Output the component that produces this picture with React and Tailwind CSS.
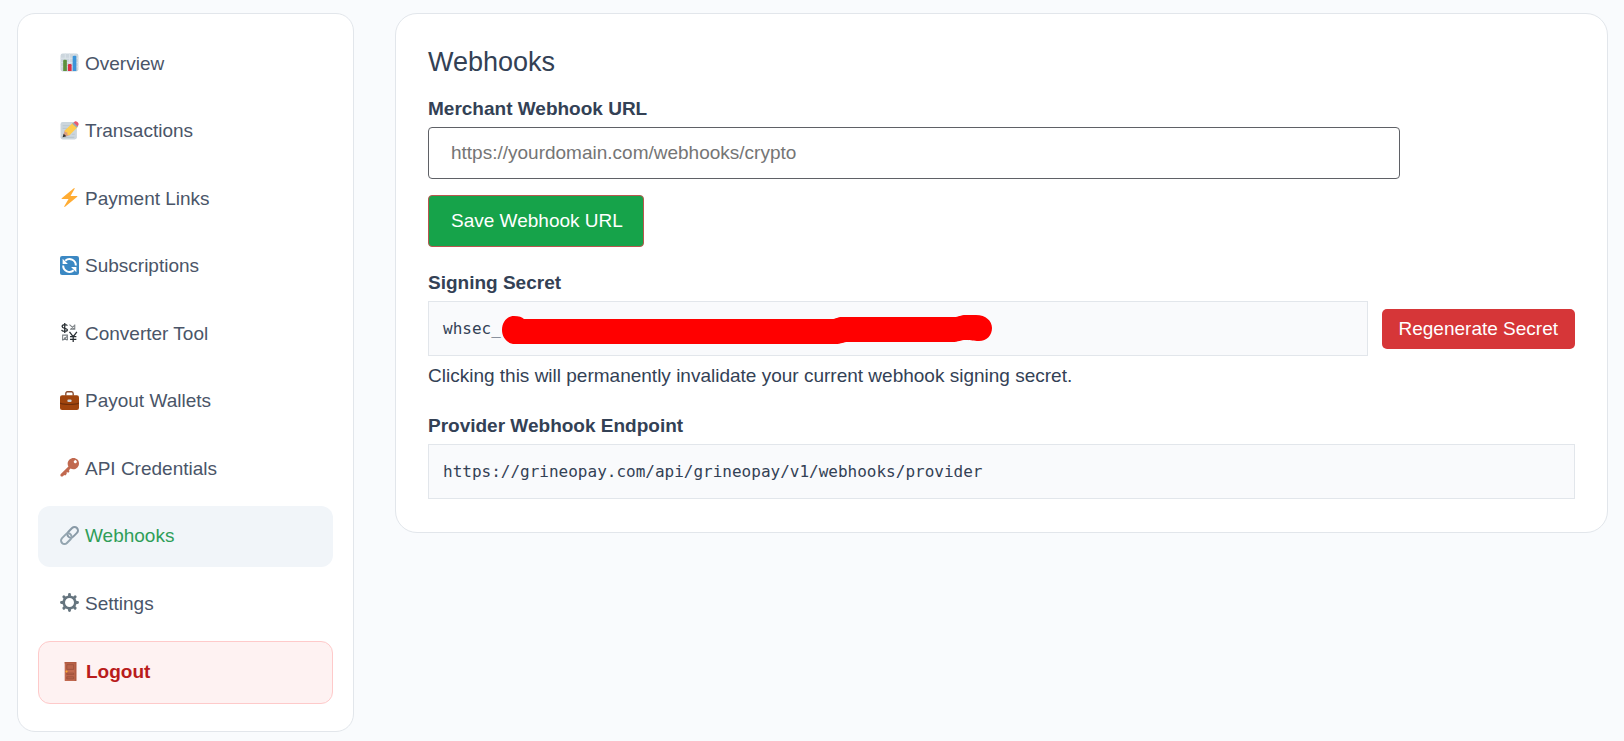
import React, { useState } from "react";

const Icon = ({ children }) => (
  <svg
    viewBox="0 0 36 36"
    className="size-[19px] shrink-0 mb-0.5"
    aria-hidden="true"
  >
    {children}
  </svg>
);

const ChartIcon = () => (
  <Icon>
    <rect x="1" y="1" width="34" height="34" rx="4" fill="#ccd6dd" />
    <path
      d="M1 10h34M1 18h34M1 26h34M10 1v34M18 1v34M26 1v34"
      stroke="#dbe3e9"
      strokeWidth="2"
    />
    <path d="M6 15a2 2 0 0 1 2-2h3a2 2 0 0 1 2 2v19H6z" fill="#5c913b" />
    <path d="M15 23a2 2 0 0 1 2-2h3a2 2 0 0 1 2 2v11h-7z" fill="#dd2e44" />
    <path d="M24 7a2 2 0 0 1 2-2h3a2 2 0 0 1 2 2v27h-7z" fill="#3b94d9" />
  </Icon>
);

const MemoIcon = () => (
  <Icon>
    <rect x="1" y="2" width="31" height="33" rx="4" fill="#ccd6dd" />
    <path
      d="M5 9h14M5 14h9M5 31h22M22 25h6"
      stroke="#b9c6cf"
      strokeWidth="2"
    />
    <path d="M9 18l-4 13 13-4 3-4-8-8z" fill="#d99e82" />
    <path d="M5 31l2-7 5 5z" fill="#292f33" />
    <path d="M9 18L24 4l9 8-15 15-4-1v-4l-4-1z" fill="#ffcc4d" />
    <path d="M23 5l4-3 8 7-3 4z" fill="#99aab5" />
    <path d="M26 3l2-2c1-1 3-1 5 1s3 4 2 5l-2 3z" fill="#ea596e" />
  </Icon>
);

const BoltIcon = () => (
  <Icon>
    <path
      d="M32.9 15.6A1 1 0 0 0 32 15H19.9L27.8 1.5A1 1 0 0 0 26.3.3l-23 19A1 1 0 0 0 4 21h12.2L8.1 34.5a1 1 0 0 0 1.5 1.2l23-19a1 1 0 0 0 .3-1.1z"
      fill="#ffac33"
    />
  </Icon>
);

const RefreshIcon = () => (
  <Icon>
    <rect width="36" height="36" rx="4" fill="#3b88c3" />
    <path
      d="M10 9A12 12 0 0 1 30 18M26 27A12 12 0 0 1 6 18"
      fill="none"
      stroke="#fff"
      strokeWidth="3.800"
    />
    <path d="M5 5v10h10z" fill="#fff" />
    <path d="M31 31V21H21z" fill="#fff" />
  </Icon>
);

const CurrencyIcon = () => (
  <Icon>
    <g fill="none" stroke="#292f33" strokeWidth="2.400">
      <path d="M14 5C13 2 4 2 4 6.500S14 9 14 13s-10 4-11 0M9 0v19" />
      <path d="M18 17l7 9 7-9M25 26v10M19 26h12M19 31h12" />
    </g>
    <g fill="none" stroke="#7b8185" strokeWidth="2">
      <path d="M18 3l9 8M28 3v9h-9M20 12l7-7" />
      <path d="M5 23h9v9M5 22v11M5 33l9-8M8 28l6 5" />
    </g>
  </Icon>
);

const BriefcaseIcon = () => (
  <Icon>
    <path
      d="M11 9V5c0-2 1-3.500 3-3.500h8c2 0 3 1.500 3 3.500v4"
      fill="none"
      stroke="#8a4b2d"
      strokeWidth="2.600"
    />
    <rect y="8" width="36" height="28" rx="4" fill="#a0440d" />
    <path d="M0 22c5 2 10 2.500 18 2.500S31 24 36 22v2c-5 2-11 2.500-18 2.500S5 26 0 24z" fill="#6e2e0a" />
    <rect x="14" y="16" width="8" height="5" rx="2" fill="#ccd6dd" />
  </Icon>
);

const KeyIcon = () => (
  <Icon>
    <path
      fillRule="evenodd"
      d="M33 3c-4-4-11-4-15 0-4 4-4.500 9-2 13L1.500 30.500c-1 1-1 3 0 4s3 1 4 0L8 32l2 1 3-3-1-2 2-1 2 1 2-3-1-2 3-3c4 2.500 9 2 13-2 4-4 4-11 0-15zm-2 6a2.500 2.500 0 1 1-4-4 2.500 2.500 0 0 1 4 4z"
      fill="#c1694f"
    />
  </Icon>
);

const LinkIcon = () => (
  <Icon>
    <g fill="none" strokeWidth="3.800">
      <rect
        x="12.500"
        y="5.500"
        width="23"
        height="13"
        rx="6.500"
        transform="rotate(-45 24 12)"
        stroke="#8899a6"
      />
      <rect
        x="0.500"
        y="17.500"
        width="23"
        height="13"
        rx="6.500"
        transform="rotate(-45 12 24)"
        stroke="#94a5b0"
      />
    </g>
  </Icon>
);

const GearIcon = () => (
  <Icon>
    <circle cx="18" cy="18" r="11" fill="none" stroke="#66757f" strokeWidth="5" />
    <g stroke="#66757f" strokeWidth="5.500" strokeLinecap="round">
      <path d="M18 2.800V6M18 30v3.200M2.800 18H6M30 18h3.200M7.300 7.300l2.200 2.200M26.500 26.500l2.200 2.200M7.300 28.700l2.200-2.200M26.500 9.500l2.200-2.200" />
    </g>
  </Icon>
);

const DoorIcon = () => (
  <Icon>
    <rect x="7" width="22" height="36" rx="1" fill="#c1694f" />
    <path d="M7 0h22v36h-3V3H7z" fill="#b05a41" />
    <path
      d="M11 5h13v9H11zM11 21h13v3H11zM11 28h13v4H11z"
      fill="#b9634a"
      stroke="#9a4f3a"
      strokeWidth="1.500"
    />
    <circle cx="10.500" cy="18" r="2" fill="#ffac33" />
  </Icon>
);

const navItems = [
  { label: "Overview", icon: ChartIcon },
  { label: "Transactions", icon: MemoIcon },
  { label: "Payment Links", icon: BoltIcon },
  { label: "Subscriptions", icon: RefreshIcon },
  { label: "Converter Tool", icon: CurrencyIcon },
  { label: "Payout Wallets", icon: BriefcaseIcon },
  { label: "API Credentials", icon: KeyIcon },
  { label: "Webhooks", icon: LinkIcon },
  { label: "Settings", icon: GearIcon },
];

const Sidebar = () => {
  const [active, setActive] = useState("Webhooks");

  return (
    <aside className="w-[337px] shrink-0 flex bg-white border border-[#e2e6eb] rounded-[18px] px-5 pt-[19px] pb-[27px]">
      <nav className="flex-1 flex flex-col justify-between">
        {navItems.map(({ label, icon: NavIcon }) => (
          <a
            key={label}
            href="#"
            onClick={() => setActive(label)}
            className={`h-[61px] flex items-center gap-1.5 px-[22px] rounded-xl ${
              active === label
                ? "bg-[#f1f5f9] text-[#2f9e58]"
                : "text-[#4a5568]"
            }`}
          >
            <NavIcon />
            <span>{label}</span>
          </a>
        ))}
        <button
          type="button"
          className="h-[63px] flex items-center gap-1.5 px-[22px] rounded-xl border border-[#fecaca] bg-[#fef2f2] text-[#b91c1c] font-bold"
        >
          <DoorIcon />
          <span>Logout</span>
        </button>
      </nav>
    </aside>
  );
};

// Covers the secret part of the key
const Redaction = () => (
  <svg
    viewBox="0 0 490 29"
    className="w-[490px] h-[29px] ml-px mt-0.5 shrink-0"
    aria-hidden="true"
  >
    <path
      d="M12 1C17 1 20 2 22 4H330C334 4 335 2 340 2H452C457 2 458 0 464 0H474C484 0 490 6 490 13C490 20 485 26 477 26C471 26 470 25 464 25C458 25 457 27 450 27H346C341 27 340 29 333 29H13C5 29 0 22 0 15C0 7 5 1 12 1Z"
      fill="#ff0000"
    />
  </svg>
);

const WebhooksPanel = () => {
  const [url, setUrl] = useState("");

  return (
    <main className="flex-1 min-w-0 self-start bg-white border border-[#e2e6eb] rounded-[22px] px-8 pt-[30px] pb-[33px]">
      <h1 className="text-[27px] leading-9 mb-[15px]">Webhooks</h1>

      <form onSubmit={(e) => e.preventDefault()} className="mb-[22px]">
        <label htmlFor="webhook-url" className="block font-bold mb-1">
          Merchant Webhook URL
        </label>
        <input
          id="webhook-url"
          type="url"
          value={url}
          onChange={(e) => setUrl(e.target.value)}
          placeholder="https://yourdomain.com/webhooks/crypto"
          className="block w-full max-w-[972px] h-[52px] px-[22px] mb-4 bg-white border border-[#5f6166] rounded placeholder:text-[#757575]"
        />
        <button
          type="submit"
          className="h-[52px] pl-[22px] pr-5 rounded border border-[#b8574f] bg-[#16a34a] text-white"
        >
          Save Webhook URL
        </button>
      </form>

      <section className="mb-[22px]">
        <h2 className="font-bold mb-1">Signing Secret</h2>
        <div className="flex items-center gap-3.5">
          <div className="flex-1 min-w-0 h-[55px] flex items-center px-3.5 overflow-hidden bg-[#f9fafc] border border-[#e2e6eb]">
            <code className="font-['DejaVu_Sans_Mono',monospace] text-base leading-7">
              whsec_
            </code>
            <Redaction />
          </div>
          <button
            type="button"
            className="h-10 px-[17px] shrink-0 rounded-[5px] bg-[#d63638] text-white"
          >
            Regenerate Secret
          </button>
        </div>
        <p className="mt-1.5">
          Clicking this will permanently invalidate your current webhook signing
          secret.
        </p>
      </section>

      <section>
        <h2 className="font-bold mb-1">Provider Webhook Endpoint</h2>
        <div className="h-[55px] flex items-center px-3.5 bg-[#f9fafc] border border-[#e2e6eb]">
          <code className="font-['DejaVu_Sans_Mono',monospace] text-base leading-7">
            https://grineopay.com/api/grineopay/v1/webhooks/provider
          </code>
        </div>
      </section>
    </main>
  );
};

const App = () => (
  <div className="min-h-screen flex gap-[41px] pl-[17px] pr-4 pt-[13px] pb-[9px] bg-[#f9fbfd] text-[#334155] font-['Liberation_Sans',Arial,sans-serif] text-[19px] leading-7">
    <Sidebar />
    <WebhooksPanel />
  </div>
);

export default App;
